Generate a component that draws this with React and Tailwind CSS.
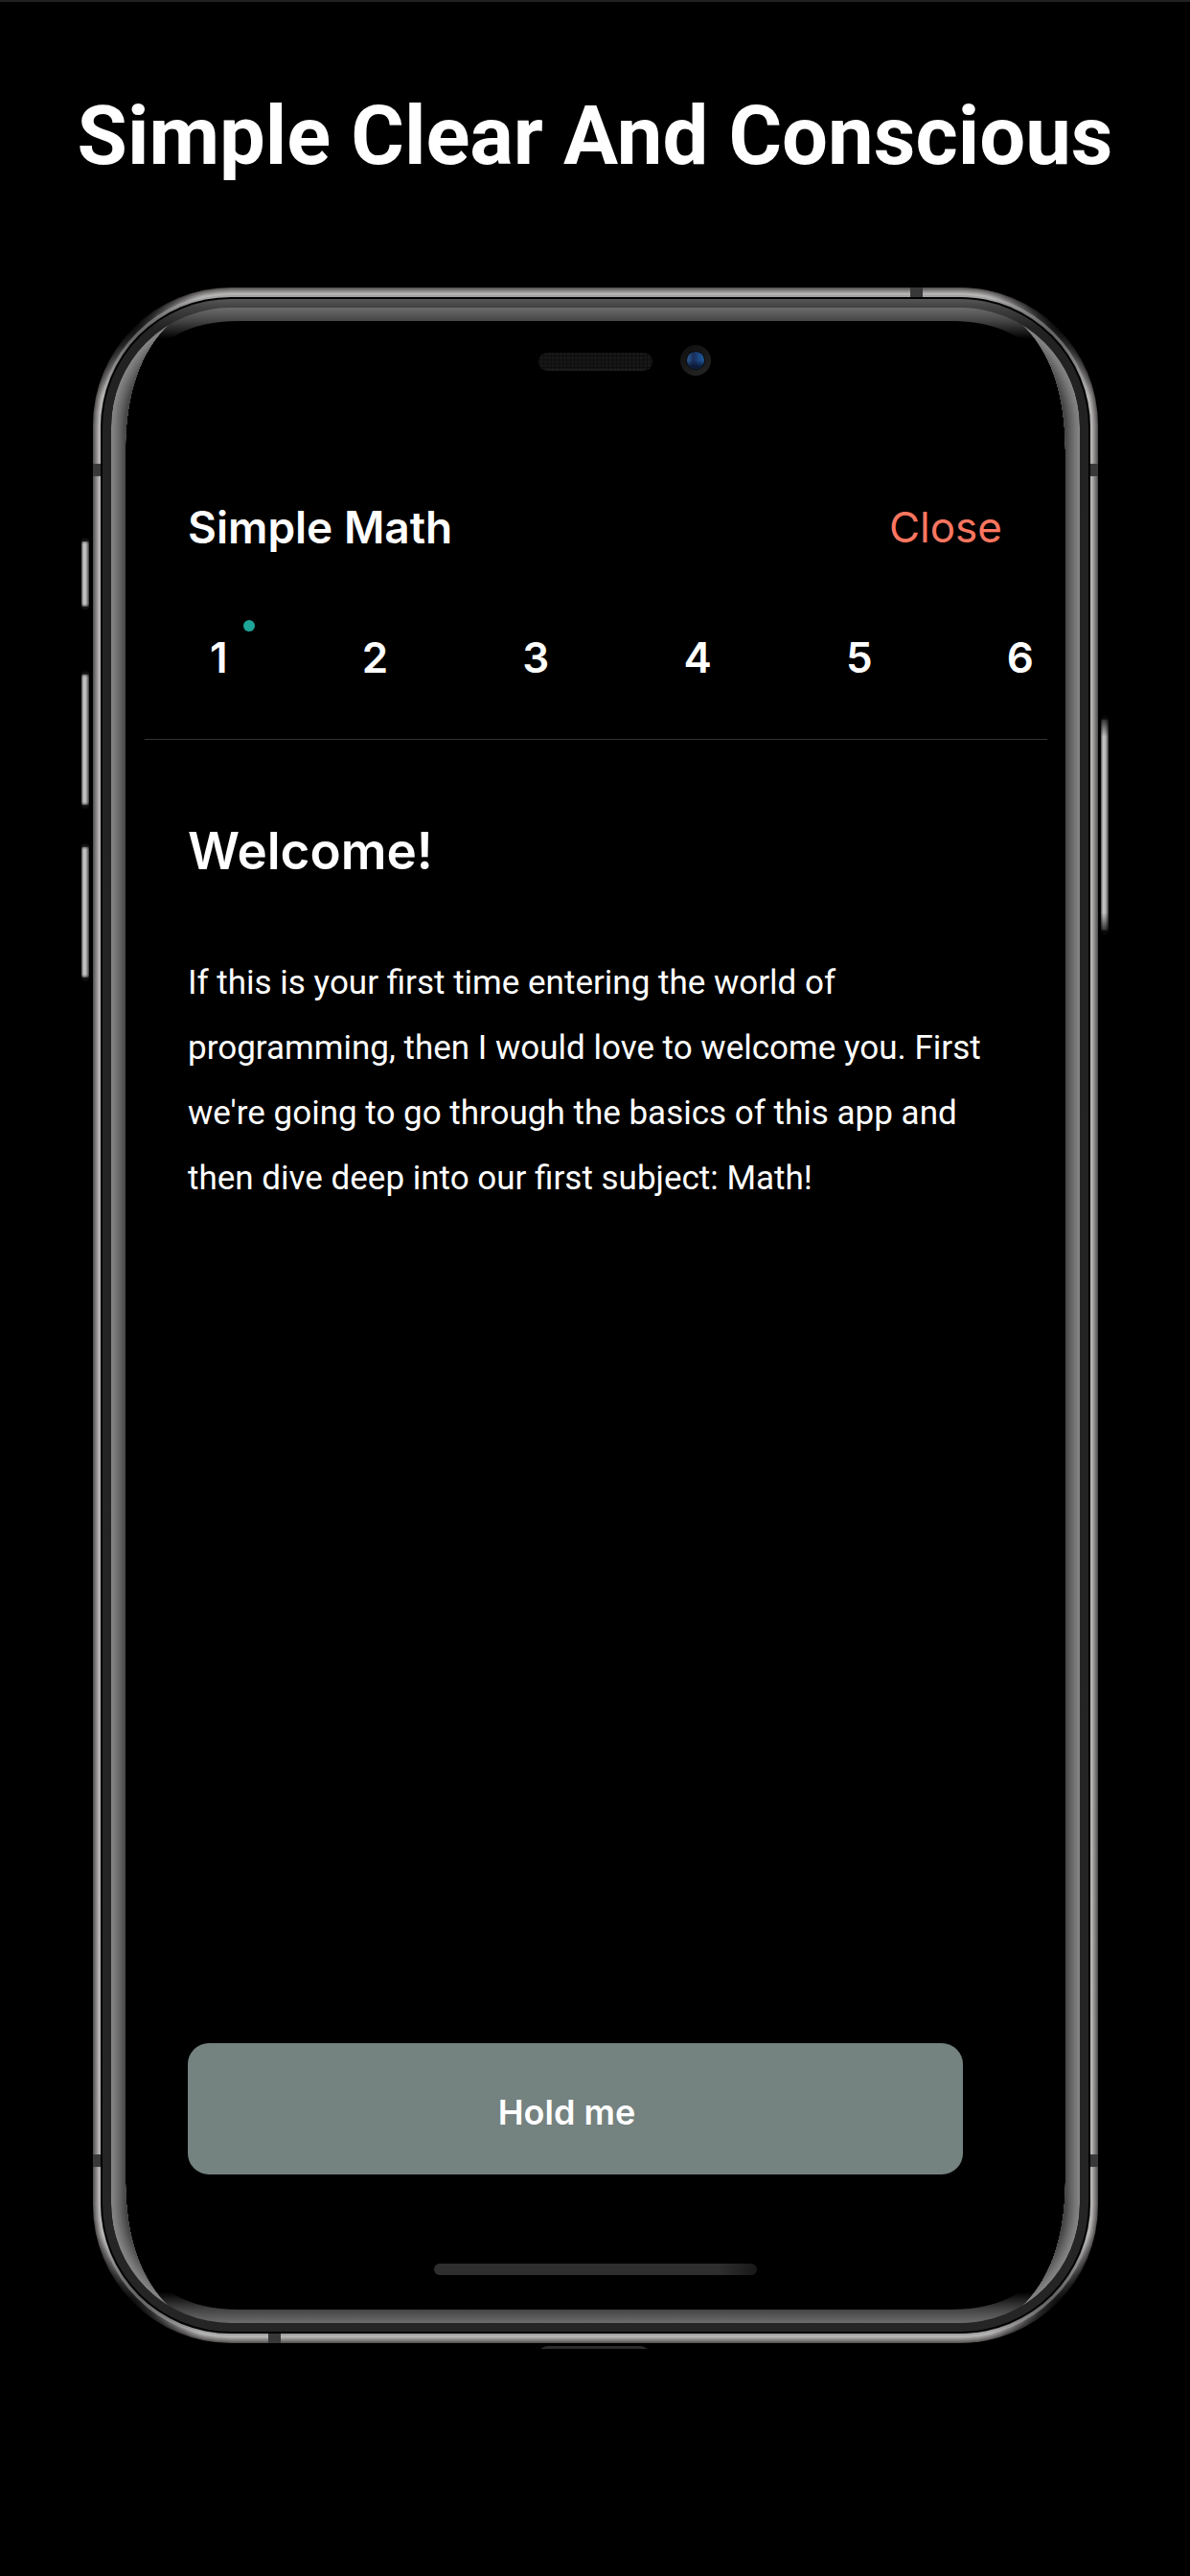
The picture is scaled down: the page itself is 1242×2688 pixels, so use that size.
import React from "react";

const outline = (inset, rx) => ({
  x: 97 + inset,
  y: 300 + inset,
  width: 1049 - inset * 2,
  height: 2146 - inset * 2,
  rx,
});

const metal = ["#565454", "#686565", "#797676", "#888585", "#989595", "#a9a6a6", "#bebdbd", "#c0c0c0", "#9a9a9a"];

const rim = [
  "#858585", "#828282", "#7f7f7f", "#7c7c7c", "#787878", "#747474", "#706f6f", "#6b6b6b",
  "#676767", "#626262", "#5d5d5d", "#585858", "#535353", "#4e4e4e", "#494949", "#444444",
];

const corners = [
  [137, 341],
  [1106, 341],
  [137, 2405],
  [1106, 2405],
];

function SideButton({ x, y, h, fade }) {
  return (
    <g>
      <rect x={x} y={y} width="8" height={h} rx="4" fill="#2c2c2c" />
      <rect x={x} y={y + 4} width="8" height={h - 8} rx="2" fill="url(#keyMetal)" />
      <rect x={x} y={y} width="8" height={fade} fill="url(#keyTop)" />
      <rect x={x} y={y + h - fade} width="8" height={fade} fill="url(#keyBottom)" />
    </g>
  );
}

function DeviceFrame() {
  return (
    <svg
      aria-hidden="true"
      viewBox="85 300 1072 2152"
      preserveAspectRatio="none"
      className="absolute inset-0 h-full w-full"
    >
      <defs>
        <linearGradient id="keyMetal" x1="0" x2="1" y1="0" y2="0">
          <stop offset="0" stopColor="#555" />
          <stop offset="0.3" stopColor="#c4c4c4" />
          <stop offset="0.6" stopColor="#b8b8b8" />
          <stop offset="1" stopColor="#3a3a3a" />
        </linearGradient>
        <linearGradient id="keyTop" x1="0" x2="0" y1="0" y2="1">
          <stop offset="0" stopColor="#000" stopOpacity="0.9" />
          <stop offset="1" stopColor="#000" stopOpacity="0" />
        </linearGradient>
        <linearGradient id="keyBottom" x1="0" x2="0" y1="1" y2="0">
          <stop offset="0" stopColor="#000" stopOpacity="0.9" />
          <stop offset="1" stopColor="#000" stopOpacity="0" />
        </linearGradient>
        <linearGradient id="bezel" gradientUnits="userSpaceOnUse" x1="0" x2="0" y1="312" y2="2434">
          <stop offset="0" stopColor="#565656" />
          <stop offset="0.004" stopColor="#424242" />
          <stop offset="0.014" stopColor="#222" />
          <stop offset="1" stopColor="#252525" />
        </linearGradient>
        <linearGradient id="rimEnds" gradientUnits="userSpaceOnUse" x1="0" x2="0" y1="321" y2="2425">
          <stop offset="0" stopColor="#6c6c6c" />
          <stop offset="0.0067" stopColor="#444" />
          <stop offset="0.0155" stopColor="#000" />
          <stop offset="0.9845" stopColor="#000" />
          <stop offset="0.9933" stopColor="#444" />
          <stop offset="1" stopColor="#6c6c6c" />
        </linearGradient>
        <radialGradient id="cornerShade">
          <stop offset="0" stopColor="#000" stopOpacity="0.9" />
          <stop offset="0.3" stopColor="#000" stopOpacity="0.7" />
          <stop offset="1" stopColor="#000" stopOpacity="0" />
        </radialGradient>
        <linearGradient id="home" x1="0" x2="1" y1="0" y2="0">
          <stop offset="0" stopColor="#2e2e2e" />
          <stop offset="0.88" stopColor="#2e2e2e" />
          <stop offset="1" stopColor="#181818" />
        </linearGradient>
        <linearGradient id="lensRing" x1="0" x2="0.6" y1="0" y2="1">
          <stop offset="0" stopColor="#0e0e0e" />
          <stop offset="1" stopColor="#222" />
        </linearGradient>
        <linearGradient id="lens" x1="0" x2="1" y1="0" y2="0">
          <stop offset="0" stopColor="#2f6098" />
          <stop offset="0.38" stopColor="#182c55" />
          <stop offset="0.6" stopColor="#1b4178" />
          <stop offset="1" stopColor="#1f5c9c" />
        </linearGradient>
        <linearGradient id="lensShade" x1="0" x2="0" y1="0" y2="1">
          <stop offset="0.5" stopColor="#0b1734" stopOpacity="0" />
          <stop offset="0.85" stopColor="#0b1734" stopOpacity="0.9" />
        </linearGradient>
        <pattern id="mesh" width="4" height="4" patternUnits="userSpaceOnUse">
          <rect width="4" height="4" fill="#0e0e0e" />
          <rect width="3" height="3" fill="#171717" />
        </pattern>
        <clipPath id="crescents">
          <path d="M116 446A125 125 0 0 1 177 338C146 366 131 412 131 470V2276C131 2334 146 2380 177 2408A125 125 0 0 1 116 2300Z" />
          <path d="M1127 446A125 125 0 0 0 1066 338C1097 366 1112 412 1112 470V2276C1112 2334 1097 2380 1066 2408A125 125 0 0 0 1127 2300Z" />
        </clipPath>
      </defs>

      <SideButton x={85} y={561} h={76} fade={7} />
      <SideButton x={85} y={700} h={144} fade={7} />
      <SideButton x={85} y={880} h={144} fade={7} />
      <SideButton x={1149} y={747} h={228} fade={22} />

      <rect {...outline(0, 144)} fill={metal[0]} />
      {metal.slice(1).map((c, i) => (
        <rect key={i} {...outline(i + 1, 143 - i)} fill={c} />
      ))}
      {corners.map(([x, y]) => (
        <circle key={`${x}-${y}`} cx={x} cy={y} r="78" fill="url(#cornerShade)" />
      ))}
      <rect {...outline(6, 138)} fill="#aaa" fillOpacity="0.5" />
      <rect x="105" y="310" width="1033" height="2126" rx="136" fill="#000" />
      <rect x="107" y="312" width="1029" height="2122" rx="134" fill="url(#bezel)" />
      <rect x="116" y="321" width="1011" height="2104" rx="125" fill="url(#rimEnds)" />
      <path
        fill="#000"
        d="M131 470C131 415 143 378 164 354L180 352C200 340 222 335 250 335H992C1020 335 1042 340 1062 352L1078 354C1099 378 1112 415 1112 470V2276C1112 2331 1099 2368 1078 2392L1062 2394C1042 2406 1020 2411 992 2411H250C222 2411 200 2406 180 2394L164 2392C143 2368 131 2331 131 2276Z"
      />
      <g clipPath="url(#crescents)">
        {rim.map((c, i) => (
          <rect
            key={i}
            x={116 + i}
            y={321 + i}
            width={1011 - i * 2}
            height={2104 - i * 2}
            rx={125 - i}
            fill={c}
          />
        ))}
      </g>

      <g fill="#383838">
        <rect x="97" y="484" width="8" height="13" />
        <rect x="1138" y="484" width="8" height="13" />
        <rect x="97" y="2249" width="8" height="13" />
        <rect x="1138" y="2249" width="8" height="13" />
        <rect x="950" y="300" width="13" height="10" />
        <rect x="280" y="2436" width="13" height="10" />
      </g>

      <rect x="562" y="368" width="119" height="19" rx="9" fill="url(#mesh)" />
      <path d="M571 386H672" stroke="#232323" />
      <circle cx="726" cy="376" r="16" fill="url(#lensRing)" />
      <circle cx="726" cy="376" r="10" fill="#080a10" />
      <circle cx="726" cy="376" r="9" fill="url(#lens)" />
      <circle cx="726" cy="376" r="9" fill="url(#lensShade)" />

      <rect x="453" y="2363" width="337" height="12" rx="6" fill="url(#home)" />
      <path d="M564 2452C567 2450 569 2449 573 2449H667C671 2449 673 2450 676 2452Z" fill="#2c2c2c" />
    </svg>
  );
}

const lessons = [1, 2, 3, 4, 5, 6];

export default function App() {
  return (
    <main className="flex min-h-screen flex-col items-center border-t-2 border-[#222222] bg-black font-['Inter',sans-serif] text-white">
      <h1 className="mt-[90px] text-center font-['Roboto',sans-serif] text-[85px] leading-[100px] font-bold">
        Simple Clear And Conscious
      </h1>

      <section className="relative mt-[108px] w-full max-w-[1072px] pb-[182px]">
        <DeviceFrame />
        <div className="relative mr-[64px] ml-[66px] pt-[220px]">
          <header className="flex items-center justify-between pr-[47px] pl-[45px]">
            <h2 className="text-[46px] leading-[60px] font-semibold">Simple Math</h2>
            <button type="button" className="text-[44px] leading-[60px] text-[#fb7660]">
              Close
            </button>
          </header>

          <nav
            aria-label="Lessons"
            className="mt-[76px] flex justify-between border-b border-[#2d3533] pr-[14px] pb-[55px] pl-[68px] text-[44px] leading-[60px] font-semibold"
          >
            {lessons.map((n) => (
              <button key={n} type="button" className="relative">
                {n}
                {n === 1 && (
                  <span className="absolute -top-[9px] left-[35px] size-3 rounded-full bg-[#1fa597]" />
                )}
              </button>
            ))}
          </nav>

          <article className="mt-[80px] pl-[45px]">
            <h3 className="text-[53px] leading-[72px] font-semibold">Welcome!</h3>
            <p className="mt-[68px] font-['Roboto',sans-serif] text-[35px] leading-[68px] whitespace-nowrap">
              If this is your first time entering the world of
              <br />
              programming, then I would love to welcome you. First
              <br />
              we're going to go through the basics of this app and
              <br />
              then dive deep into our first subject: Math!
            </p>
          </article>

          <div className="mt-[868px] pr-[88px] pl-[45px]">
            <button
              type="button"
              className="h-[137px] w-full rounded-[22px] bg-[#748280] pt-[6px] pr-[18px] text-[36px] font-semibold"
            >
              Hold me
            </button>
          </div>
        </div>
      </section>
    </main>
  );
}
